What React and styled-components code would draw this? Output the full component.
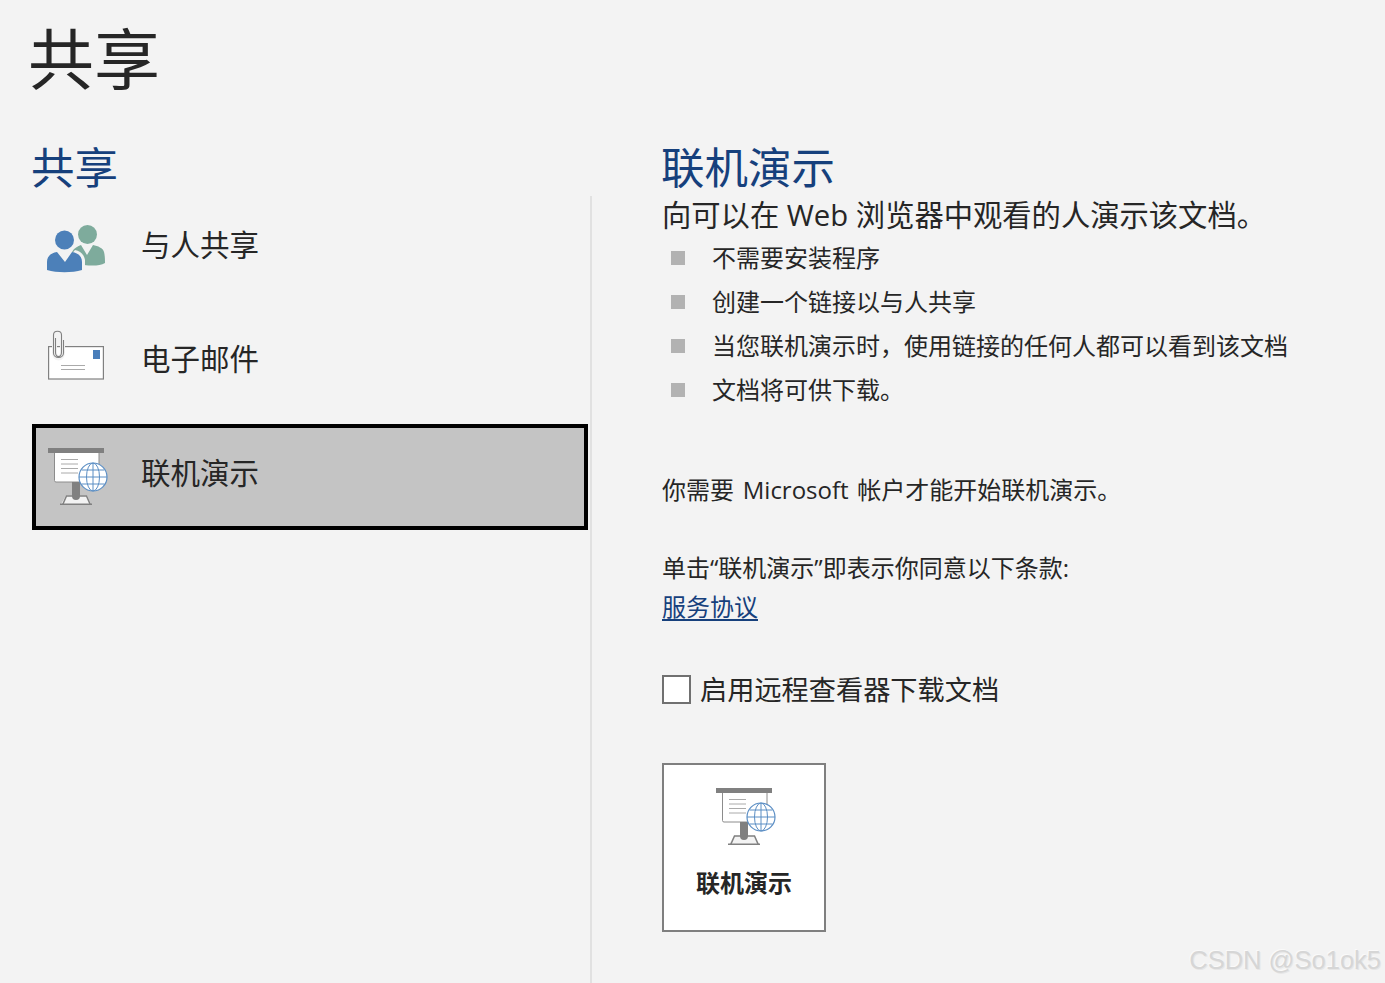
import React from "react";
import styled, { createGlobalStyle } from "styled-components";

const Global = createGlobalStyle`
  html, body { margin: 0; padding: 0; background: #f3f3f3; }
  body { font-family: "Open Sans", "Noto Sans CJK SC", sans-serif; color: #262626; }
`;
const Page = styled.div`
  position: relative; width: 1385px; height: 983px; overflow: hidden; background: #f3f3f3;
  display: flex; flex-direction: column;
`;
const Title = styled.h1`
  margin: 0; padding: 16px 0 0 28px; height: 84px; font-size: 66px; line-height: 84px; font-weight: 400; color: #262626;
`;
const Columns = styled.div`
  display: flex; margin-top: 40px; flex: 1; min-height: 0;
`;
const LeftColumn = styled.section`
  width: 592px; padding-left: 32px; box-sizing: border-box; display: flex; flex-direction: column;
`;
const RightColumn = styled.section`
  flex: 1; padding-left: 70px; display: flex; flex-direction: column; align-items: flex-start;
`;
const Heading = styled.h2`
  margin: 0 0 0 -1px; font-size: 43.5px; line-height: 56px; height: 56px; font-weight: 400; color: #16407c;
`;
const Nav = styled.nav`
  flex: 1; display: flex; flex-direction: column; gap: 8px; border-right: 2px solid #e1e1e1; padding-right: 2px;
`;
const NavItem = styled.div`
  height: 106px; box-sizing: border-box; display: flex; align-items: center; gap: 33px;
  padding: 0 0 8px 8px;
  border: 4px solid ${p => (p.$active ? "#000" : "transparent")};
  background: ${p => (p.$active ? "#c4c4c4" : "transparent")};
  font-size: 29.5px; line-height: 40px; color: #262626;
`;
const Icon = styled.svg`
  width: 64px; height: 64px; flex: none; display: block;
`;
const Desc = styled.p`
  margin: 0; font-size: 29.3px; line-height: 38px; white-space: nowrap; color: #262626;
`;
const Bullets = styled.ul`
  list-style: none; margin: 2px 0 0; padding: 0;
`;
const Bullet = styled.li`
  height: 44px; box-sizing: border-box; display: flex; align-items: center; font-size: 24px; white-space: nowrap; color: #262626;
  padding: 0 0 4px 9px;
  &::before { content: ""; width: 14px; height: 14px; background: #b2b2b2; margin: 4px 27px 0 0; flex: none; }
`;
const Para = styled.p`
  margin: ${p => p.$top}px 0 0; font-size: 24px; line-height: 40px; white-space: nowrap; word-spacing: 2.5px; color: #262626;
`;
const TermsLink = styled.a`
  margin-top: -1px; font-size: 24px; line-height: 39px; color: #16407c; text-decoration: underline; text-underline-offset: 3px;
`;
const CheckRow = styled.label`
  margin-top: 49px; display: flex; align-items: center; gap: 9px; font-size: 27.2px; line-height: 29px; height: 29px; white-space: nowrap; color: #262626;
`;
const CheckBox = styled.span`
  width: 29px; height: 29px; box-sizing: border-box; border: 2px solid #707070; background: #fff; flex: none;
`;
const BigButton = styled.button`
  margin-top: 59px; width: 164px; height: 169px; box-sizing: border-box; border: 2px solid #7f7f7f; background: #fff;
  padding: 16px 0 0; display: flex; flex-direction: column; align-items: center;
  font-family: inherit; font-size: 24px; font-weight: 700; line-height: 34px; color: #262626;
`;
const ButtonLabel = styled.span`
  margin-top: 21px;
`;
const Watermark = styled.div`
  position: absolute; right: 4px; bottom: 6px; font-family: "Liberation Sans", sans-serif; font-size: 25.5px; line-height: 34px;
  color: #d6d6d6; text-shadow: 1px 1px 0 #e6e6e6, -1px -1px 0 #fafafa; white-space: nowrap;
`;

const PeopleIcon = () => (
  <Icon viewBox="44 213 64 64">
    <circle cx="87.5" cy="234.5" r="9.5" fill="#7eab9c" />
    <path d="M72 252c2-4 6-6 9-7l6 10 6-10c5 1 10 3 11 7 1 4 1 8 1 11-5 3-13 3-21 2z" fill="#7eab9c" />
    <circle cx="64.5" cy="240" r="10.5" fill="#f3f3f3" />
    <path d="M45 274v-14c2-7 6-9 10-10l10 12 10-12c5 1 9 4 10 10v12z" fill="#f3f3f3" />
    <circle cx="64.5" cy="240" r="9.5" fill="#4c80b9" />
    <path d="M47 262c0-6 4-9 10-10l8 10 7-10c6 1 10 4 10 10v8c-10 3-25 3-35 0z" fill="#4c80b9" />
  </Icon>
);

const MailIcon = () => (
  <Icon viewBox="44 327 64 64">
    <rect x="48.6" y="346.6" width="54.8" height="32.4" fill="#fff" stroke="#808080" strokeWidth="1.2" />
    <rect x="93" y="350" width="7" height="9" fill="#4a7eba" />
    <path d="M61 365.500h24M61 369.500h24" stroke="#aaa" strokeWidth="1" />
    <path d="M56.500 338v14c0 6 6 6 6 0v-17c0-5-8-5-8 0v18c0 8 10 8 10 0v-18" transform="translate(-1 0)" fill="none" stroke="#f3f3f3" strokeWidth="3" />
    <path d="M56.500 338v14c0 6 6 6 6 0v-17c0-5-8-5-8 0v18c0 6 10 6 10 0v-13" transform="translate(-1 0)" fill="none" stroke="#808080" strokeWidth="1.1" />
  </Icon>
);

const PresentIcon = () => (
  <Icon viewBox="44 441 64 64">
    <path d="M66 495.500h21l5 10.500H60z" fill="#f3f3f3" />
    <path d="M66.500 496h20l4 9H62.500z" fill="none" stroke="#808080" strokeWidth="1.500" />
    <rect x="60" y="503.500" width="32" height="2.500" fill="#808080" />
    <rect x="54.500" y="449" width="44.500" height="33" rx="1.500" fill="#fff" stroke="#8c8c8c" strokeWidth="1" />
    <rect x="48" y="448" width="56" height="5" fill="#808080" />
    <path d="M61 459.500h17M61 464h17M61 468.500h17M61 473h17" stroke="#aaa" strokeWidth="1" />
    <path d="M72 482h8v14a4 4 0 0 1-8 0z" fill="#808080" />
    <g fill="none" stroke="#5b8ec4" strokeWidth="1">
      <circle cx="93" cy="477" r="14" fill="#fff" strokeWidth="1.200" />
      <ellipse cx="93" cy="477" rx="6.500" ry="14" />
      <path d="M93 463v28M79 477h28M81.500 470h23M81.500 484h23" />
    </g>
  </Icon>
);

export default function App() {
  return (
    <Page>
      <Global />
      <Title>共享</Title>
      <Columns>
        <LeftColumn>
          <Heading>共享</Heading>
          <Nav>
            <NavItem><PeopleIcon />与人共享</NavItem>
            <NavItem><MailIcon />电子邮件</NavItem>
            <NavItem $active><PresentIcon />联机演示</NavItem>
          </Nav>
        </LeftColumn>
        <RightColumn>
          <Heading>联机演示</Heading>
          <Desc>向可以在 Web 浏览器中观看的人演示该文档。</Desc>
          <Bullets>
            <Bullet>不需要安装程序</Bullet>
            <Bullet>创建一个链接以与人共享</Bullet>
            <Bullet>当您联机演示时，使用链接的任何人都可以看到该文档</Bullet>
            <Bullet>文档将可供下载。</Bullet>
          </Bullets>
          <Para $top={58}>你需要 Microsoft 帐户才能开始联机演示。</Para>
          <Para $top={38}>单击“联机演示”即表示你同意以下条款:</Para>
          <TermsLink href="#">服务协议</TermsLink>
          <CheckRow><CheckBox />启用远程查看器下载文档</CheckRow>
          <BigButton>
            <PresentIcon />
            <ButtonLabel>联机演示</ButtonLabel>
          </BigButton>
        </RightColumn>
      </Columns>
      <Watermark>CSDN @So1ok5</Watermark>
    </Page>
  );
}
